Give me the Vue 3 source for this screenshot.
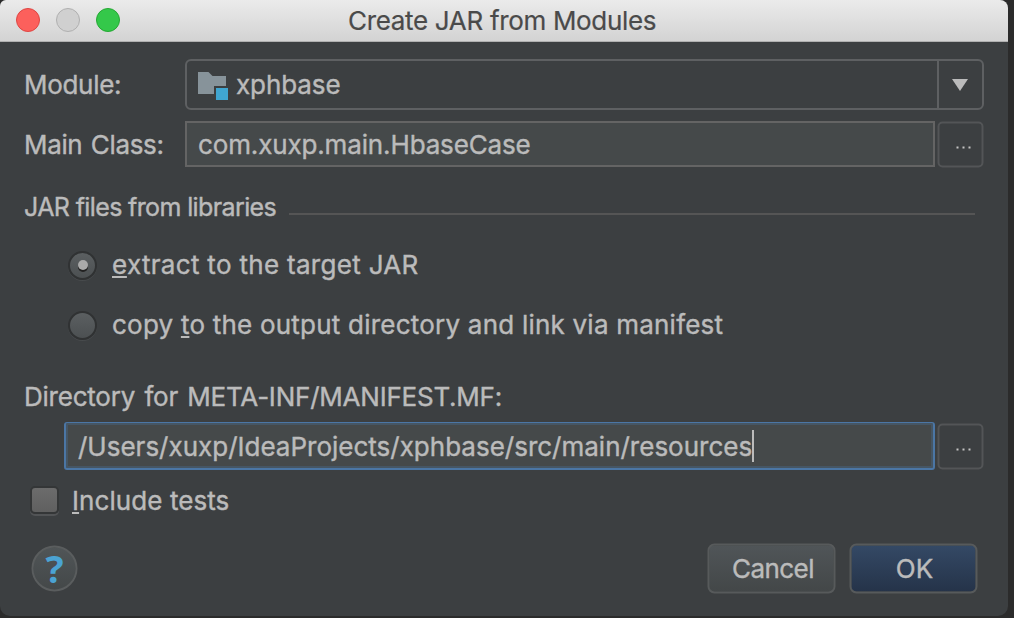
<script setup>
</script>

<template>
  <div class="screen">
    <div class="window">
      <header class="titlebar">
        <i class="light red"></i><i class="light grey"></i><i class="light green"></i>
        <h1>Create JAR from Modules</h1>
      </header>
      <main>
        <div class="row module">
          <label class="l-module">Module:</label>
          <div class="combo">
            <svg class="folder" width="32" height="30" viewBox="0 0 32 30">
              <path d="M0 0h10.5l4 4H28v10H16v8H0z" fill="#87939a" />
              <rect x="18" y="16" width="12" height="12" fill="#40a6d1" />
            </svg>
            <span class="t">xphbase</span>
            <div class="arrow"><svg width="16" height="12" viewBox="0 0 16 12"><path d="M0 0h16L8 12z" fill="#bbb" /></svg></div>
          </div>
        </div>
        <div class="row main-class">
          <label class="l-class">Main Class:</label>
          <div class="field"><span class="t t-class">com.xuxp.main.HbaseCase</span></div>
          <button class="more"><i></i><i></i><i></i></button>
        </div>
        <div class="row section"><span class="t t-section">JAR files from libraries</span><hr /></div>
        <div class="row radio r1"><i class="dot on"></i><span class="t"><u>e</u>xtract to the target JAR</span></div>
        <div class="row radio r2"><i class="dot"></i><span class="t">copy <u>t</u>o the output directory and link via manifest</span></div>
        <div class="row dir"><span class="t">Directory for META-INF/MANIFEST.MF:</span></div>
        <div class="row path">
          <div class="field focus"><span class="t">/Users/xuxp/IdeaProjects/xphbase/src/main/resources</span><b class="caret"></b></div>
          <button class="more"><i></i><i></i><i></i></button>
        </div>
        <div class="row check"><i class="box"></i><span class="t"><u>I</u>nclude tests</span></div>
        <footer>
          <button class="help">?</button>
          <button class="btn cancel">Cancel</button>
          <button class="btn ok">OK</button>
        </footer>
      </main>
    </div>
  </div>
</template>

<style>
body { margin: 0; background: #2b2b2b; }
</style>
<style scoped>
* { box-sizing: border-box; }
.screen { width: 1014px; height: 618px; overflow: hidden; background: #2b2b2b; font: 26px/30px Inter, "Liberation Sans", sans-serif; color: #bbb; -webkit-text-stroke: 0.4px; }
.window { width: 1008px; height: 616px; background: #3c3f41; border-radius: 6px 8px 10px 10px; overflow: hidden; }
.t { white-space: pre; }
.titlebar { height: 42px; display: flex; align-items: center; padding: 0 0 1px 16px; gap: 16px; background: linear-gradient(#ebebeb, #d3d3d3); border-bottom: 1px solid #b0b0b0; }
.light { width: 24px; height: 24px; border-radius: 50%; flex: none; }
.red { background: #fc605c; border: 1px solid #de4643; }
.grey { background: #d0d0d0; border: 1px solid #b0b0b0; }
.green { background: #34c84a; border: 1px solid #25a833; }
h1 { margin: 0 0 0 212px; padding-top: 2px; font-weight: 400; font-size: 26px; color: #4a4a4a; letter-spacing: -0.32px; -webkit-text-stroke: 0.2px; }
.row { display: flex; align-items: center; }
.module { height: 51px; margin-top: 17px; }
label { width: 161px; margin-left: 24px; }
.l-module { letter-spacing: -0.3px; }
.l-class { letter-spacing: -0.35px; word-spacing: 1.5px; padding-top: 2px; }
.combo { width: 799px; height: 51px; border: 2px solid #5e6062; border-radius: 6px; display: flex; align-items: center; padding-left: 11px; letter-spacing: -0.1px; }
.folder { margin: 5px 6px 0 0; }
.arrow { margin-left: auto; width: 45px; height: 100%; border-left: 2px solid #5e6062; display: flex; align-items: center; padding-left: 13px; }
.main-class { height: 46px; margin-top: 11px; }
.field { width: 750px; height: 46px; background: #45494a; border: 2px solid #646464; display: flex; align-items: center; padding-left: 11px; }
.t-class { letter-spacing: -0.14px; padding-top: 2px; }
.more { width: 46px; height: 46px; margin-left: 3px; border: 2px solid #535557; border-radius: 5px; background: none; padding: 5px 0 0 5px; display: flex; align-items: center; justify-content: center; gap: 4px; transform: translate(-0.5px, 0.5px); }
.more i { width: 2px; height: 2px; background: #c4c4c4; }
.section { height: 30px; margin-top: 25px; padding-left: 24px; }
.t-section { width: 252px; font-size: 25px; letter-spacing: -0.62px; }
hr { margin: 14px 33px 0 13px; flex: 1; border: 0; height: 2px; background: #555; }
.radio { height: 30px; padding-left: 68px; }
.dot { width: 29px; height: 29px; border-radius: 50%; border: 2px solid #303233; background: linear-gradient(#5b5f61, #4c5052); box-shadow: 0 1px #484b4d; margin-right: 15px; display: flex; align-items: center; justify-content: center; }
.dot.on::after { content: ''; width: 10px; height: 10px; border-radius: 50%; background: #aaa; box-shadow: 0 2px #222; }
u { text-decoration: underline; text-decoration-thickness: 2px; text-underline-offset: 2px; text-decoration-skip-ink: none; }
.r1 { margin-top: 28px; letter-spacing: 0.31px; }
.r2 { margin-top: 30px; letter-spacing: 0.22px; }
.dir { height: 30px; margin-top: 42px; padding-left: 24px; letter-spacing: -0.22px; word-spacing: 2.2px; }
.path { height: 48px; margin-top: 10px; padding-left: 64px; }
.focus { width: 871px; height: 48px; border: solid #4b76a5; border-width: 1px 2px 2px; border-radius: 3px; box-shadow: inset 0 0 0 2px #465664; padding-left: 12px; }
.focus .t { padding-top: 2px; }
.caret { width: 2px; height: 32px; background: #bbb; }
.check { height: 30px; margin-top: 15px; padding-left: 30px; letter-spacing: 0.08px; }
.check .t { padding-top: 2px; }
.box { width: 29px; height: 28px; border: 2px solid #343637; border-radius: 5px; background: linear-gradient(#6c6c6c, #606060); box-shadow: 0 2px #525456; margin-right: 13px; }
footer { display: flex; height: 50px; align-items: center; margin-top: 28px; padding-left: 31px; }
.help { width: 46px; height: 46px; border-radius: 50%; border: 2px solid #5a5d5e; background: linear-gradient(#505557, #444849); color: #4ba3d3; font: 700 38px/38px "Open Sans", sans-serif; padding: 0 0 3px; margin-right: auto; transform: translate(0.5px, 0.5px); -webkit-text-stroke: 0; }
.btn { width: 128px; height: 50px; border: 2px solid #575a5b; border-radius: 7px; background: linear-gradient(#505558, #434748); font: inherit; color: #bbb; padding: 0 0 1px 2px; margin-right: 14px; transform: translate(0.5px, 0.5px); -webkit-text-stroke: 0.4px; }
.cancel { letter-spacing: -0.55px; padding-left: 3px; }
.ok { background: linear-gradient(#344965, #253349); margin-right: 31px; }
</style>
